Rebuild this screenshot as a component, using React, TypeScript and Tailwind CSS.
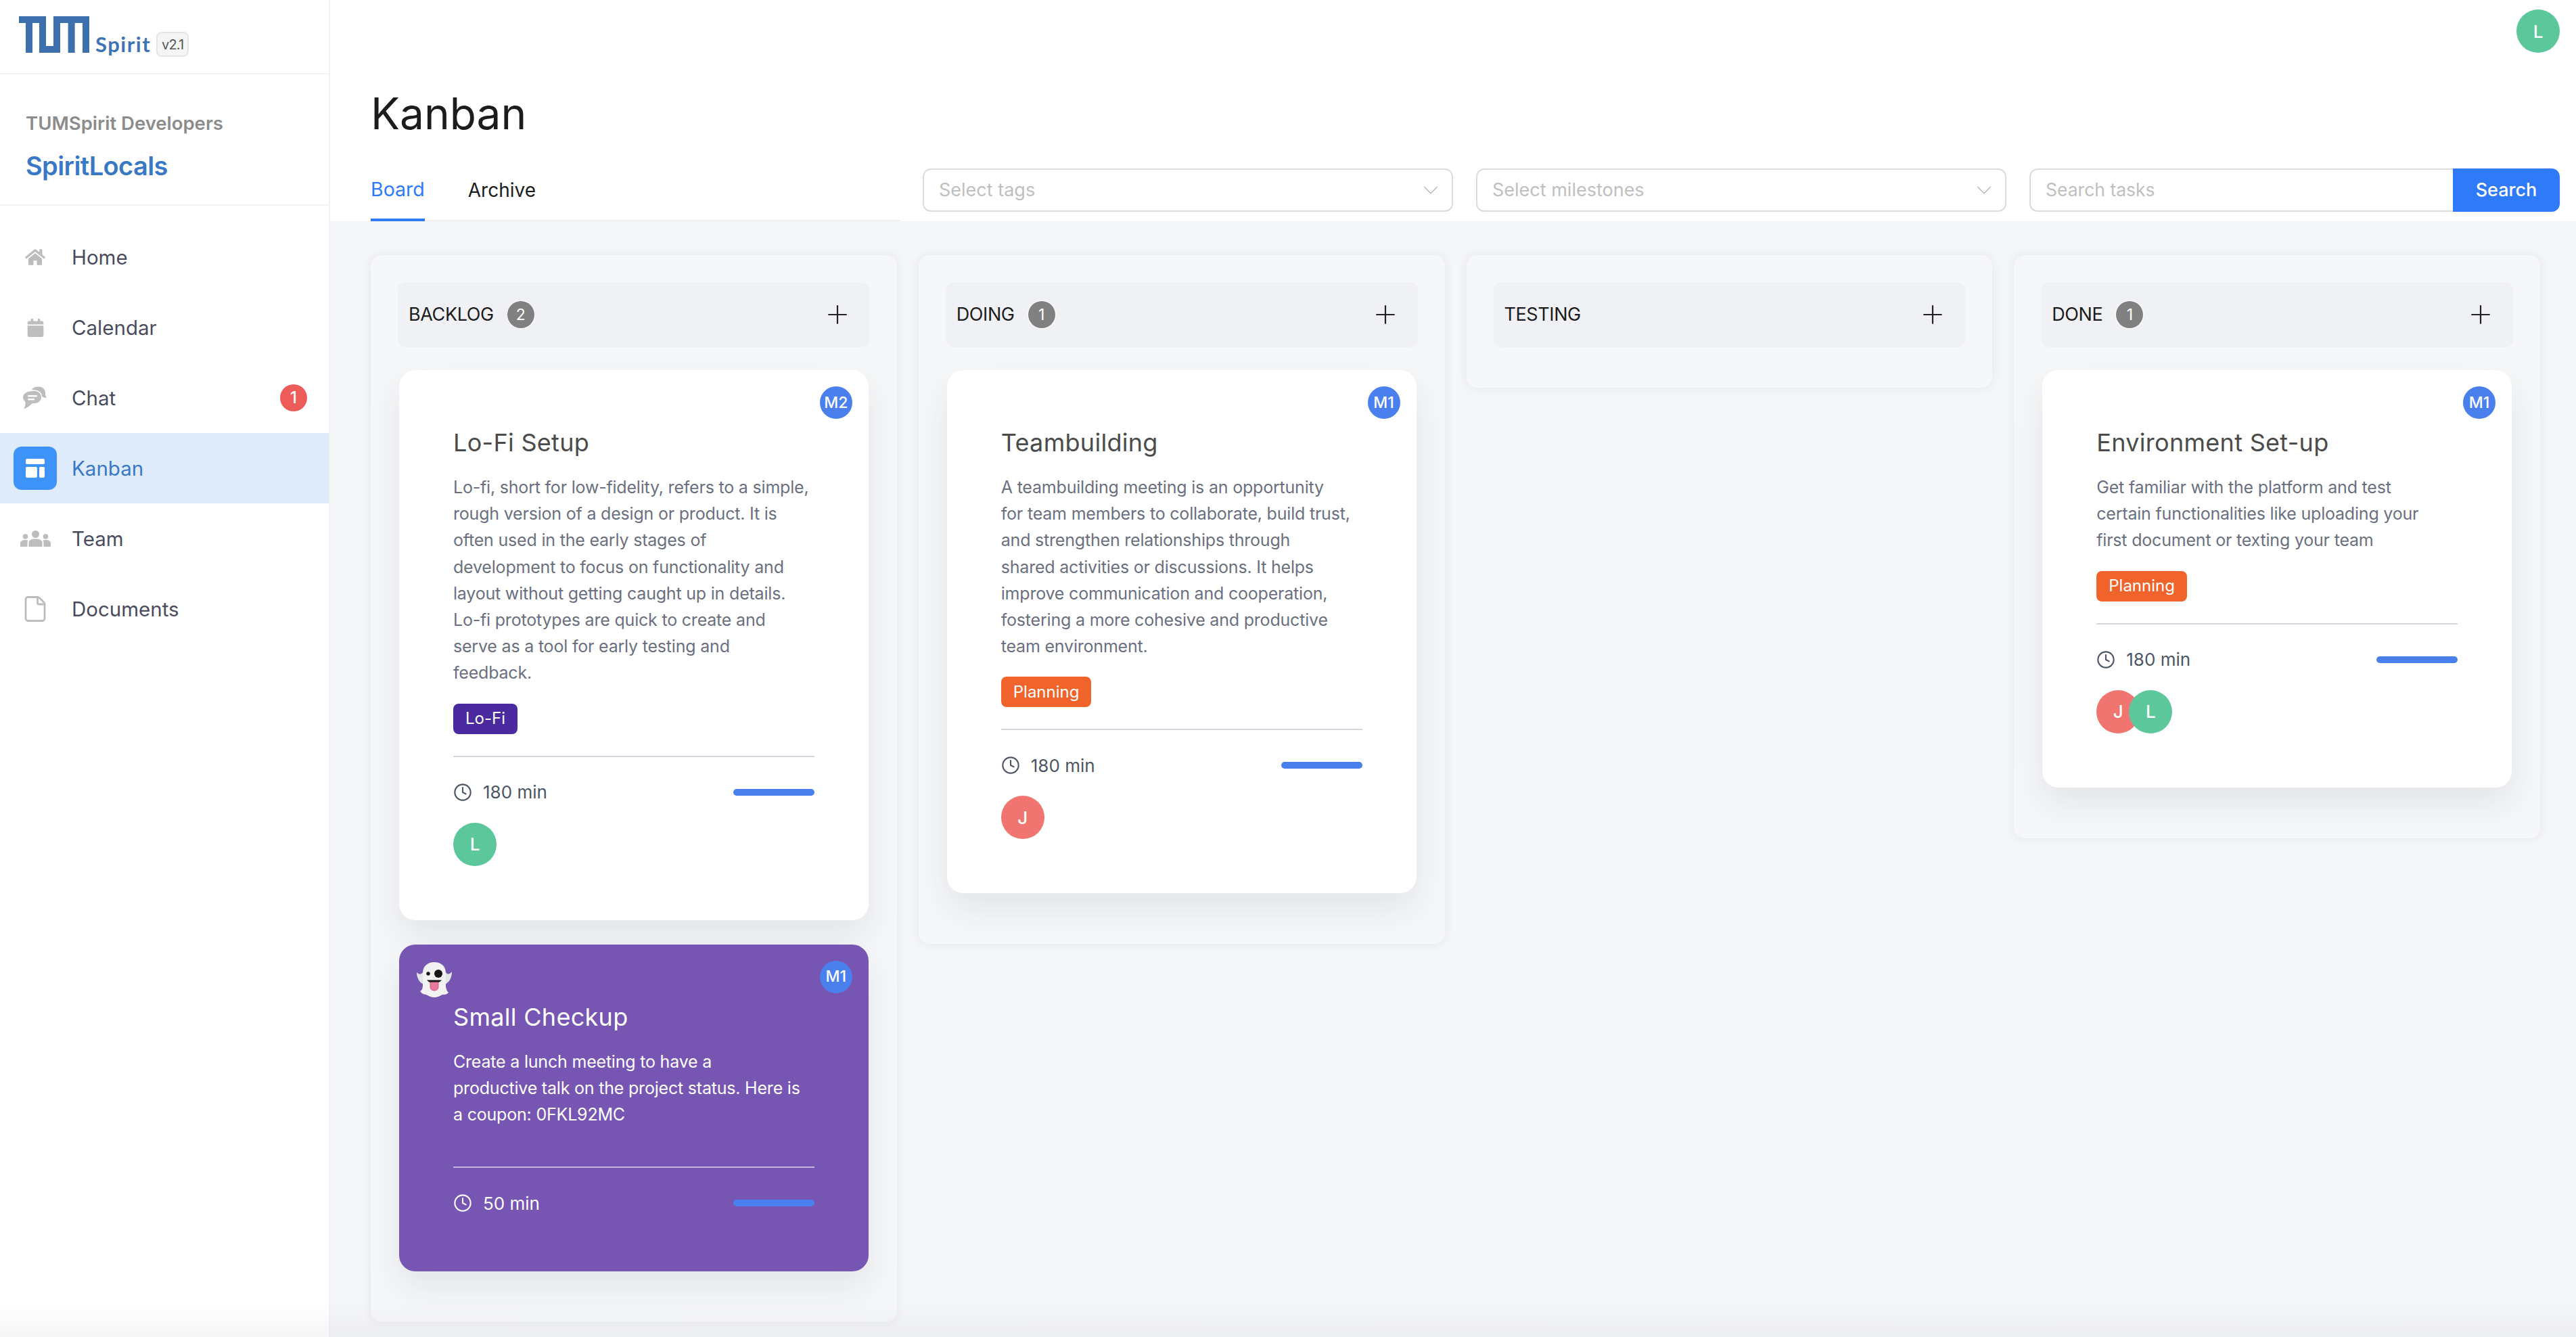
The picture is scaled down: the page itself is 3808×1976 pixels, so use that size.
import React from "react";
import { Clock, File, Plus, ChevronDown } from "lucide-react";
import { FaCalendar, FaHome } from "react-icons/fa";

type Task = {
  title: string;
  text: string;
  milestone: string;
  minutes: number;
  tag?: { label: string; color: string };
  people?: string[];
  ghost?: boolean;
};

const planning = { label: "Planning", color: "bg-[#f0642c]" };

const columns: { name: string; tasks: Task[] }[] = [
  {
    name: "BACKLOG",
    tasks: [
      {
        title: "Lo-Fi Setup",
        text: "Lo-fi, short for low-fidelity, refers to a simple,\nrough version of a design or product. It is\noften used in the early stages of\ndevelopment to focus on functionality and\nlayout without getting caught up in details.\nLo-fi prototypes are quick to create and\nserve as a tool for early testing and\nfeedback.",
        milestone: "M2",
        minutes: 180,
        tag: { label: "Lo-Fi", color: "bg-[#4a2a9e]" },
        people: ["L"],
      },
      {
        title: "Small Checkup",
        text: "Create a lunch meeting to have a\nproductive talk on the project status. Here is\na coupon: 0FKL92MC",
        milestone: "M1",
        minutes: 50,
        ghost: true,
      },
    ],
  },
  {
    name: "DOING",
    tasks: [
      {
        title: "Teambuilding",
        text: "A teambuilding meeting is an opportunity\nfor team members to collaborate, build trust,\nand strengthen relationships through\nshared activities or discussions. It helps\nimprove communication and cooperation,\nfostering a more cohesive and productive\nteam environment.",
        milestone: "M1",
        minutes: 180,
        tag: planning,
        people: ["J"],
      },
    ],
  },
  { name: "TESTING", tasks: [] },
  {
    name: "DONE",
    tasks: [
      {
        title: "Environment Set-up",
        text: "Get familiar with the platform and test\ncertain functionalities like uploading your\nfirst document or texting your team",
        milestone: "M1",
        minutes: 180,
        tag: planning,
        people: ["J", "L"],
      },
    ],
  },
];

function ChatIcon() {
  return (
    <svg width="36" height="34" viewBox="0 0 36 34" fill="none">
      <path d="M13 5C15 1 20 0 24 0.5C30 1.2 33 5 33 10C33 12 33 14 35 17C32 17 30 16 28 15C28 10 24 6 18 5.5Z" fill="#bdbdbd" />
      <path d="M14 7C21 6 27 10 27 16C27 22 21 26 14 25C11 27 6 33 1 33C3 30 4 27 3.5 23C1 21 0 18 0 16C0 11 6 7 14 7Z" fill="#bdbdbd" />
      <rect x="7" y="13" width="14" height="2.5" rx="1.2" fill="#fff" />
      <rect x="7" y="18" width="10" height="2.5" rx="1.2" fill="#fff" />
    </svg>
  );
}

function KanbanIcon() {
  return (
    <svg width="28" height="28" viewBox="0 0 28 28" fill="#fff">
      <rect x="0" y="0" width="28" height="8" rx="2" />
      <rect x="0" y="12" width="17" height="16" rx="2" />
      <rect x="20" y="12" width="8" height="16" rx="2" />
    </svg>
  );
}

function TeamIcon() {
  return (
    <svg width="45" height="24" viewBox="0 0 45 24" fill="#bdbdbd">
      <circle cx="22.5" cy="5.5" r="5.5" />
      <circle cx="7.5" cy="9" r="3.8" />
      <circle cx="37.5" cy="9" r="3.8" />
      <path d="M12.5 24V18C12.5 14.5 16 12.5 22.5 12.5C29 12.5 32.5 14.5 32.5 18V24Z" />
      <path d="M0 24V19C0 16 3 14 7.5 14C9 14 10.5 14.2 11.5 14.8C10.8 16 10.5 17 10.5 18.5V24Z" />
      <path d="M45 24V19C45 16 42 14 37.5 14C36 14 34.5 14.2 33.5 14.8C34.2 16 34.5 17 34.5 18.5V24Z" />
    </svg>
  );
}

function GhostIcon() {
  return (
    <svg width="52" height="52" viewBox="0 0 52 52">
      <path d="M9 15C6 19 3 18 0 15C0 23 4 30 9 32ZM43 15C46 19 49 18 52 14C52 23 48 30 43 32Z" fill="#e4e6e6" />
      <path d="M9 16C9 6 16 0 26 0C36 0 43 6 43 16L43 36C44 42 46 44 47 45C44 48 41 48 38 48C34 50 31 52 26 52C21 52 18 50 14 48C11 48 8 47 5 43C7 42 9 40 9 34Z" fill="#f2f2f2" />
      <circle cx="17" cy="17" r="2.7" fill="#151515" />
      <circle cx="32" cy="17" r="6" fill="#151515" />
      <path d="M20 28H32V37C32 40 29 42 26 42C23 42 20 40 20 37Z" fill="#e8789c" stroke="#d4567e" />
      <path d="M15 26.5H37C35 29 33 30 31 29.5H21C19 30 17 29 15 26.5Z" fill="#151515" />
    </svg>
  );
}

function Avatar({ letter, overlap }: { letter: string; overlap?: boolean }) {
  return (
    <div
      className={
        "flex h-16 w-16 items-center justify-center rounded-full text-[26px] font-medium text-white " +
        (letter === "J" ? "bg-[#f07470] " : "bg-[#5bc79b] ") +
        (overlap ? "-ml-4" : "")
      }
    >
      {letter}
    </div>
  );
}

function TaskCard({ task }: { task: Task }) {
  const dark = task.ghost;
  return (
    <div
      className={
        "relative rounded-[24px] p-20 shadow-[0_24px_50px_rgba(30,40,60,0.09)] " +
        (dark ? "bg-[#7755b2] text-white" : "bg-white")
      }
    >
      {dark && (
        <div className="absolute left-[26px] top-[26px]">
          <GhostIcon />
        </div>
      )}
      <div className="absolute right-6 top-6 flex h-12 w-12 items-center justify-center rounded-full bg-[#4a80ee] text-[23px] font-medium text-white">
        {task.milestone}
      </div>
      <div
        className={
          "text-[36px] leading-[54px] tracking-[0.3px] " +
          (dark ? "text-white" : "text-[#4b4b4b]")
        }
      >
        {task.title}
      </div>
      <div
        className={
          "mt-5 whitespace-pre-line text-[25px] leading-[39.2px] tracking-[-0.2px] " +
          (dark ? "text-white" : "text-[#6b7080]")
        }
      >
        {task.text}
      </div>
      {task.tag ? (
        <div
          className={
            "mt-[25px] inline-flex h-[45px] items-center rounded-lg px-[18px] text-[24px] text-white " +
            task.tag.color
          }
        >
          {task.tag.label}
        </div>
      ) : (
        <div className="h-[25px]" />
      )}
      <div
        className={
          "mt-8 h-[2px] " + (dark ? "bg-[#c3b4dc]" : "bg-[#d5d7de]")
        }
      />
      <div
        className={
          "mt-[31px] flex h-[42px] items-center " +
          (dark ? "text-white" : "text-[#4b5563]")
        }
      >
        <Clock size={28} strokeWidth={1.8} />
        <span className="ml-4 text-[26px]">{task.minutes} min</span>
        <div className="ml-auto h-[10px] w-[120px] rounded-full bg-[#4a80ee]" />
      </div>
      {task.people && (
        <div className="mt-6 flex">
          {task.people.map((p, i) => (
            <Avatar key={p} letter={p} overlap={i > 0} />
          ))}
        </div>
      )}
    </div>
  );
}

function Column({ name, tasks }: { name: string; tasks: Task[] }) {
  return (
    <div className="self-start rounded-2xl bg-[#f6f7f9] px-[42px] pb-10 pt-10 shadow-[0_0_16px_rgba(20,30,50,0.07)]">
      <div className="-mx-0.5 flex h-24 items-center rounded-xl bg-[#f0f1f5] pl-4 pr-[26px]">
        <span className="text-[27px] tracking-[-0.4px] text-[#1c1c1c]">{name}</span>
        {tasks.length > 0 && (
          <span className="ml-5 flex h-10 w-10 items-center justify-center rounded-full bg-[#808080] text-[23px] text-white ring-1 ring-white">
            {tasks.length}
          </span>
        )}
        <Plus size={44} strokeWidth={1.2} className="ml-auto text-[#222]" />
      </div>
      {tasks.length > 0 ? (
        <div className="mb-[35px] mt-[34px] flex flex-col gap-9">
          {tasks.map((t) => (
            <TaskCard key={t.title} task={t} />
          ))}
        </div>
      ) : (
        <div className="h-5" />
      )}
    </div>
  );
}

function SelectBox({ label }: { label: string }) {
  return (
    <div className="flex h-16 w-[784px] items-center justify-between rounded-xl border-2 border-[#dcdcdc] pl-[22px] pr-3 text-[27px] text-[#bfbfbf]">
      <span>{label}</span>
      <ChevronDown size={38} strokeWidth={0.8} className="text-[#b5b5b5]" />
    </div>
  );
}

const navItems = [
  { label: "Home", icon: <FaHome size={30} color="#bdbdbd" /> },
  { label: "Calendar", icon: <FaCalendar size={27} color="#bdbdbd" /> },
  { label: "Chat", icon: <ChatIcon />, badge: 1 },
  { label: "Kanban", icon: <KanbanIcon />, active: true },
  { label: "Team", icon: <TeamIcon /> },
  { label: "Documents", icon: <File size={42} strokeWidth={1.6} color="#bdbdbd" /> },
];

export default function App() {
  return (
    <div className="relative flex h-screen w-full overflow-hidden bg-white font-['Inter',sans-serif]">
      {/* SIDEBAR */}
      <aside className="w-[488px] shrink-0 border-r-2 border-[#f2f2f2] bg-white">
        <div className="flex h-[110px] items-start border-b-2 border-[#f4f4f4] pl-7 pt-6">
          <svg width="104" height="54" viewBox="0 0 104 54" fill="#3f70ae">
            <path d="M0 0H40V54H30V10H20V54H10V10H0ZM40 44H51V54H40ZM51 0H104V54H94V10H82.6V54H72.6V10H61V54H51Z" />
          </svg>
          <span className="ml-[9px] mt-[22px] font-['Lato',sans-serif] text-[31px] font-bold leading-[38px] tracking-[1.5px] text-[#3f73b3]">
            Spirit
          </span>
          <span className="ml-2 mt-[23px] flex h-[37px] w-12 items-center justify-center rounded-lg border-2 border-[#e5e5e5] bg-[#f5f5f5] text-[20px] tracking-[-0.8px] text-[#555]">
            v2.1
          </span>
        </div>
        <div className="h-[194px] border-b-2 border-[#f4f4f4] pl-[38px] pt-[54px]">
          <div className="text-[27.5px] font-semibold leading-9 text-[#8c8c8c]">
            TUMSpirit Developers
          </div>
          <div className="mt-[21px] text-[38px] font-semibold leading-[48px] tracking-[-0.6px] text-[#3878c7]">
            SpiritLocals
          </div>
        </div>
        <nav className="pt-6">
          {navItems.map((item) => (
            <div
              key={item.label}
              className={
                "flex h-[104px] items-center pl-5 pr-[32px] " +
                (item.active ? "bg-[#deebfb]" : "")
              }
            >
              <div
                className={
                  "flex h-16 w-16 items-center justify-center rounded-xl " +
                  (item.active ? "bg-[#3e93fb]" : "")
                }
              >
                {item.icon}
              </div>
              <span
                className={
                  "ml-[22px] text-[29.5px] " +
                  (item.active ? "text-[#3878c7]" : "text-[#4a4c5e]")
                }
              >
                {item.label}
              </span>
              {item.badge && (
                <span className="ml-auto flex h-10 w-10 items-center justify-center rounded-full bg-[#ee5c5a] text-[24px] font-medium text-white">
                  {item.badge}
                </span>
              )}
            </div>
          ))}
        </nav>
      </aside>

      {/* MAIN */}
      <main className="flex min-w-0 flex-1 flex-col bg-[#f5f6fa]">
        <header className="h-[327px] shrink-0 bg-white pl-[60px] pr-6 pt-3.5">
          <div className="flex justify-end">
            <Avatar letter="L" />
          </div>
          <h1 className="mt-[45px] text-[64px] leading-[90px] text-[#1c1c1c]">
            Kanban
          </h1>
          <div className="mt-9 flex h-[78px]">
            <div className="flex w-[785px] gap-[64px] border-b-2 border-[#f0f0f2]">
              <div className="-mb-[2px] flex items-center border-b-4 border-[#2f7af8] pb-3 text-[28.5px] text-[#2f7af8]">
                Board
              </div>
              <div className="flex items-center pb-3 text-[28px] text-[#1c1c1c]">
                Archive
              </div>
            </div>
            <div className="ml-[33px] flex h-16 gap-[34px]">
              <SelectBox label="Select tags" />
              <SelectBox label="Select milestones" />
              <div className="flex w-[784px]">
                <div className="flex flex-1 items-center rounded-l-xl border-2 border-r-0 border-[#dcdcdc] px-[22px] text-[26.5px] text-[#bfbfbf]">
                  Search tasks
                </div>
                <div className="flex w-[158px] items-center justify-center rounded-r-xl bg-[#2f7af8] text-[27px] font-medium text-white">
                  Search
                </div>
              </div>
            </div>
          </div>
        </header>

        {/* BOARD */}
        <div className="grid flex-1 grid-cols-4 items-start gap-8 pl-[60px] pr-[53px] pt-[50px]">
          {columns.map((c) => (
            <Column key={c.name} name={c.name} tasks={c.tasks} />
          ))}
        </div>
      </main>

      {/* soft shade along the bottom edge of the page */}
      <div className="pointer-events-none absolute inset-x-0 bottom-0 h-[50px] bg-gradient-to-t from-[rgba(0,0,0,0.035)] to-transparent" />
    </div>
  );
}
